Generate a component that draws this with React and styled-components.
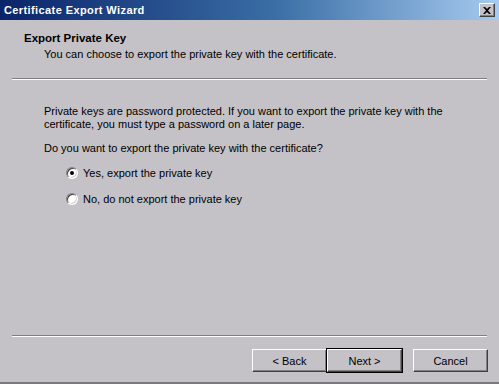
import styled, { createGlobalStyle } from "styled-components";

const GlobalStyle = createGlobalStyle`
  html, body {
    margin: 0;
    padding: 0;
    background: #c4c2c6;
  }
`;

const Window = styled.div`
  width: 499px;
  height: 384px;
  box-sizing: border-box;
  display: flex;
  flex-direction: column;
  background: #c4c2c6;
  border-bottom: 2px solid #7a787c;
  font-family: "Liberation Sans", Arial, sans-serif;
  font-size: 11px;
  color: #000;
`;

const TitleBar = styled.div`
  height: 20px;
  flex-shrink: 0;
  display: flex;
  align-items: center;
  justify-content: space-between;
  padding: 0 4px 0 4px;
  background: linear-gradient(to right, #0a246a 0%, #3a6ea5 55%, #a6caf0 100%);
`;

const Title = styled.span`
  color: #fff;
  font-weight: bold;
  font-size: 11px;
  letter-spacing: 0.4px;
`;

const CloseButton = styled.div`
  width: 16px;
  height: 14px;
  box-sizing: border-box;
  display: flex;
  align-items: center;
  justify-content: center;
  background: #c4c2c6;
  border: 1px solid;
  border-color: #fff #404040 #404040 #fff;
  box-shadow: inset -1px -1px 0 #808080;
`;

const Header = styled.div`
  padding: 11px 0 0 24px;
  height: 47px;
  flex-shrink: 0;
`;

const HeaderTitle = styled.div`
  font-weight: bold;
  font-size: 11.5px;
  line-height: 14px;
`;

const HeaderSub = styled.div`
  padding: 3px 0 0 20px;
  line-height: 13px;
`;

const Separator = styled.div`
  margin: 0 12px;
  height: 0;
  border-top: 1px solid #808080;
  border-bottom: 1px solid #fff;
`;

const Body = styled.div`
  flex: 1;
  padding: 25px 0 0 44px;
`;

const Paragraph = styled.p`
  margin: 0 0 ${(p) => p.$gap || 0}px 0;
  line-height: 13px;
  width: 420px;
`;

const RadioRow = styled.label`
  display: flex;
  align-items: center;
  gap: 5px;
  height: 13px;
  margin: 0 0 ${(p) => p.$gap || 0}px 22px;
`;

const RadioCircle = styled.span`
  position: relative;
  width: 12px;
  height: 12px;
  box-sizing: border-box;
  border-radius: 50%;
  border: 1px solid;
  border-color: #808080 #fff #fff #808080;
  background: #fff;
  box-shadow: inset 1px 1px 0 #404040, inset -1px -1px 0 #d4d0c8;
  flex-shrink: 0;

  &::after {
    content: "";
    display: ${(p) => (p.$checked ? "block" : "none")};
    position: absolute;
    left: 3px;
    top: 3px;
    width: 4px;
    height: 4px;
    border-radius: 50%;
    background: #000;
  }
`;

const Footer = styled.div`
  flex-shrink: 0;
  padding-bottom: 10px;
`;

const ButtonRow = styled.div`
  display: flex;
  justify-content: flex-end;
  padding: 12px 11px 0 0;
`;

const Button = styled.div`
  width: 75px;
  height: 23px;
  box-sizing: border-box;
  display: flex;
  align-items: center;
  justify-content: center;
  background: #c4c2c6;
  border: 1px solid;
  border-color: #fff #404040 #404040 #fff;
  box-shadow: inset -1px -1px 0 #808080;
  outline: ${(p) => (p.$default ? "1px solid #000" : "none")};
  margin-left: ${(p) => p.$gap || 0}px;
`;

function App() {
  return (
    <>
      <GlobalStyle />
      <Window>
        <TitleBar>
          <Title>Certificate Export Wizard</Title>
          <CloseButton>
            <svg width="8" height="7" viewBox="0 0 8 7">
              <path d="M0 0h2l2 2 2-2h2L5 3.5 8 7H6L4 5 2 7H0l3-3.5z" fill="#000" />
            </svg>
          </CloseButton>
        </TitleBar>
        <Header>
          <HeaderTitle>Export Private Key</HeaderTitle>
          <HeaderSub>You can choose to export the private key with the certificate.</HeaderSub>
        </Header>
        <Separator />
        <Body>
          <Paragraph $gap={11}>
            Private keys are password protected. If you want to export the private key with the
            certificate, you must type a password on a later page.
          </Paragraph>
          <Paragraph $gap={11}>Do you want to export the private key with the certificate?</Paragraph>
          <RadioRow $gap={13}>
            <RadioCircle $checked />
            Yes, export the private key
          </RadioRow>
          <RadioRow>
            <RadioCircle />
            No, do not export the private key
          </RadioRow>
        </Body>
        <Footer>
          <Separator />
          <ButtonRow>
            <Button>&lt; Back</Button>
            <Button $default>Next &gt;</Button>
            <Button $gap={11}>Cancel</Button>
          </ButtonRow>
        </Footer>
      </Window>
    </>
  );
}

export default App;
